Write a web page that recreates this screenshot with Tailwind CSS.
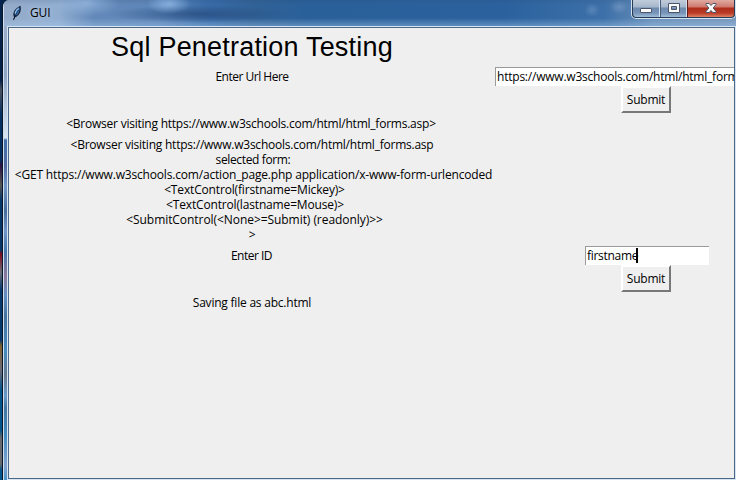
<!DOCTYPE html>
<html lang="en">
<head>
<meta charset="utf-8">
<title>GUI</title>
<script src="https://cdn.jsdelivr.net/npm/@tailwindcss/browser@4"></script>
</head>
<body class="w-[736px] h-[480px] overflow-hidden bg-[#07234a] font-['Open_Sans','Noto_Sans',sans-serif] text-[12px] leading-[15px] text-black">
<div class="relative flex h-[480px] w-[736px] overflow-hidden">
  <!-- desktop sliver -->
  <div class="w-[2px] shrink-0 bg-[linear-gradient(180deg,#06264f_0px,#031f46_80px,#4a5360_90px,#033060_115px,#033060_160px,#2a1245_165px,#555_185px,#063568_200px,#063568_250px,#800c20_254px,#6a6a75_272px,#05396e_290px,#05396e_340px,#80602c_346px,#6a6a75_370px,#035489_390px,#035489_430px,#66696d_438px,#66696d_464px,#035489_470px)]"></div>
  <!-- window -->
  <div class="flex h-[480px] w-[734px] shrink-0 flex-col overflow-hidden rounded-tl-[7px] border-l border-[#0b1726] bg-[#7899c3]">
    <header class="relative flex h-[26px] shrink-0 items-center border-l border-[#d0dfef] bg-[linear-gradient(90deg,#95abc9_0px,#91aed1_55px,#6389b9_90px,#5d85b8_155px,#386ba8_205px,#316297_250px,#2a6099_300px,#2b629e_500px,#3d70a8_600px,#6a90ba_650px,#7696bb_732px)]">
      <div class="absolute inset-0 bg-[radial-gradient(ellipse_32px_13px_at_83px_3px,#a9c9ee88,#a9c9ee00),radial-gradient(ellipse_22px_10px_at_165px_4px,#a5cdf699,#a5cdf600),radial-gradient(ellipse_90px_9px_at_195px_14px,#274b7cbb,#274b7c00),radial-gradient(ellipse_8px_7px_at_588px_10px,#7098c688,#7098c600),radial-gradient(ellipse_9px_7px_at_615px_7px,#7d9dc899,#7d9dc800),linear-gradient(180deg,#25406522_0px,#25406500_5px,#a9cdf000_18px,#a9cdf066_26px)]"></div>
      <svg class="relative ml-[8px] h-[16px] w-[10px]" viewBox="0 0 10 16">
        <path d="M1 15.5 2 12C0 8 3 3 8.5 .7 9.7 5 8 10.5 3.2 12.2Z" fill="#14243c"/>
        <path d="M3 10C2.5 7 4.7 3.8 7.3 2.4 7.8 5.6 6.4 8.8 3.6 10.7Z" fill="#4b8fdc"/>
        <path d="M3 8.5C3.6 6 5 4 6.7 3" stroke="#b6d8f8" fill="none"/>
        <path d="M1.5 15 3.5 10 6.7 5" stroke="#0b1726" stroke-width=".8" fill="none"/>
      </svg>
      <span class="relative ml-[8px] -mt-px tracking-[-0.1px] [text-shadow:0_0_5px_#c5d8ee]">GUI</span>
      <!-- caption buttons -->
      <div class="absolute left-[627px] top-0 flex h-[19px] w-[105px] overflow-hidden rounded-b-[5px] border border-t-0 border-[#d4e1ee] bg-[#263c58]">
        <div class="flex h-[17px] w-full overflow-hidden rounded-b-[4px] border-x border-[#263c58]">
          <div class="flex w-[27px] items-center justify-center border-r border-[#d4e1ee] bg-[linear-gradient(180deg,#c1ccda_0px,#a5b6cb_7px,#6f8bad_8px,#7794b9_13px,#a0bdd7_17px)]">
            <svg class="h-[17px] w-[14px]" viewBox="0 0 14 17"><rect x="1.5" y="8.5" width="11" height="4" rx=".5" fill="#fafafa" stroke="#4b566a"/></svg>
          </div>
          <div class="flex w-[27px] shrink-0 items-center justify-center border-x border-l-[#485f7c] border-r-[#d4e1ee] bg-[linear-gradient(180deg,#c1ccda_0px,#a5b6cb_7px,#6f8bad_8px,#7794b9_13px,#a0bdd7_17px)]">
            <svg class="h-[17px] w-[14px]" viewBox="0 0 14 17"><path fill-rule="evenodd" d="M1.5 3.5h11v9h-11zM4.5 6.5v3h5v-3z" fill="#fafafa" stroke="#4b566a"/></svg>
          </div>
          <div class="flex w-[47px] shrink-0 items-center justify-center border-l border-[#5c1b1b] bg-[linear-gradient(180deg,#dfaaa2_0px,#cf796d_7px,#ae2c1b_8px,#b93b28_13px,#df8263_17px)]">
            <svg class="h-[17px] w-[14px]" viewBox="0 0 14 17"><path d="M2 3.5h3.2L7 5.5l1.8-2H12v1L9.2 8 12 11.5v1H8.8L7 10.5l-1.8 2H2v-1L4.8 8 2 4.5z" fill="#fafafa" stroke="#4b566a"/></svg>
          </div>
        </div>
      </div>
    </header>
    <div class="flex h-[454px] shrink-0">
      <div class="w-[4px] shrink-0 border-l border-[#d0dfef] bg-[linear-gradient(180deg,#9aaecb_0px,#90a6c6_50px,#b7c9df_80px,#d8e4f0_112px,#3e6fa9_114px,#536da2_140px,#7197c8_160px,#456d9c_185px,#6d95c8_205px,#4578ae_225px,#8d7799_250px,#608fc5_270px,#46739d_290px,#458abf_325px,#697a8c_350px,#659acb_370px,#44779e_382px,#438dc1_410px,#81a4ce_440px,#4a94c7_454px)]"></div>
      <!-- client area -->
      <div class="h-[454px] w-[729px] shrink-0 border-l border-t border-[#d7e5f3] bg-[#d7e5f3]">
        <main class="grid h-[452px] w-[727px] grid-cols-[486px_303px] grid-rows-[38px_20px_27px_20px_112px_20px_27px_20px] content-start overflow-hidden border border-[#4b6888] bg-[#efefef]">
          <h1 class="col-start-1 self-center justify-self-center whitespace-nowrap font-['Liberation_Sans',Arial,sans-serif] text-[27px] leading-[38px] tracking-[0.2px]">Sql Penetration Testing</h1>
          <p class="col-start-1 row-start-2 self-center text-center tracking-[-0.5px]">Enter Url Here</p>
          <div class="col-start-2 row-start-2 flex h-[19px] items-center self-center overflow-hidden whitespace-nowrap border-l border-t border-[#9a9a9a] bg-white pl-[1px] tracking-[-0.22px]">https://www.w3schools.com/html/html_forms.asp</div>
          <button class="col-start-2 row-start-3 mr-px flex h-[27px] w-[50px] items-center justify-center self-start justify-self-center border-2 border-t-white border-l-white border-r-[#777] border-b-[#777] bg-[#efefef] tracking-[-0.22px]">Submit</button>
          <p class="col-start-1 row-start-4 self-center whitespace-nowrap pr-[2px] text-center tracking-[-0.23px]">&lt;Browser visiting https://www.w3schools.com/html/html_forms.asp&gt;</p>
          <div class="col-start-1 row-start-5 self-center whitespace-nowrap text-center tracking-[-0.23px]">
            <p>&lt;Browser visiting https://www.w3schools.com/html/html_forms.asp</p>
            <p class="pl-[2px] tracking-[-0.36px]">selected form:</p>
            <p class="pl-[3px] tracking-[-0.18px]">&lt;GET https://www.w3schools.com/action_page.php application/x-www-form-urlencoded</p>
            <p class="pl-[5px] tracking-[-0.16px]">&lt;TextControl(firstname=Mickey)&gt;</p>
            <p class="pl-[6px] tracking-[-0.16px]">&lt;TextControl(lastname=Mouse)&gt;</p>
            <p class="pl-[5px] tracking-[-0.06px]">&lt;SubmitControl(&lt;None&gt;=Submit) (readonly)&gt;&gt;</p>
            <p>&gt;</p>
          </div>
          <p class="col-start-1 row-start-6 self-center pr-px text-center tracking-[-0.5px]">Enter ID</p>
          <div class="col-start-2 row-start-6 ml-px flex h-[19px] w-[124px] items-center self-center justify-self-center border-l border-t border-[#9a9a9a] bg-white pl-[1px] tracking-[-0.3px]">firstname<span class="-ml-[2px] h-[15px] w-[2px] bg-black"></span></div>
          <button class="col-start-2 row-start-7 mr-px flex h-[27px] w-[50px] items-center justify-center self-start justify-self-center border-2 border-t-white border-l-white border-r-[#777] border-b-[#777] bg-[#efefef] tracking-[-0.22px]">Submit</button>
          <p class="col-start-1 row-start-8 self-center text-center tracking-[-0.22px]">Saving file as abc.html</p>
        </main>
      </div>
    </div>
  </div>
</div>
</body>
</html>
